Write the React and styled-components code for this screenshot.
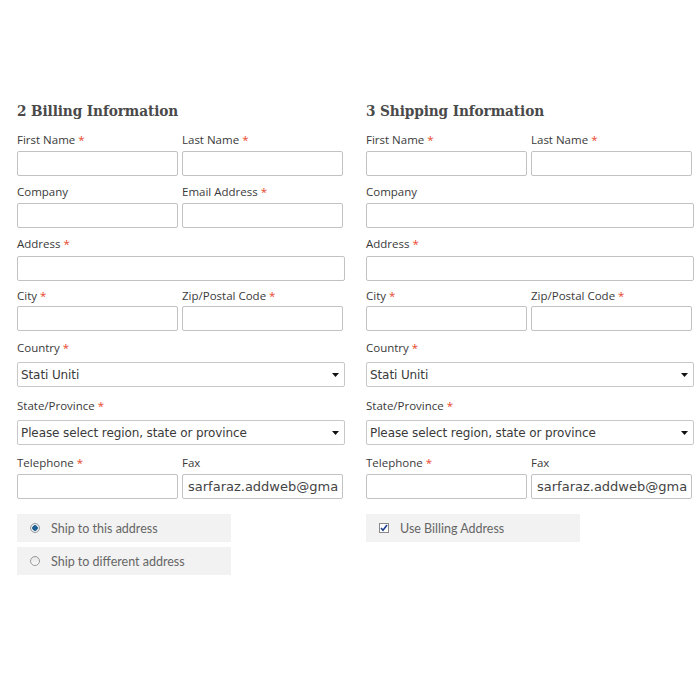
import React from 'react';
import styled, { createGlobalStyle } from 'styled-components';

const GlobalStyle = createGlobalStyle`
  body {
    margin: 0;
    background: #fff;
    font-family: Lato, "Open Sans", sans-serif;
  }
`;

const Page = styled.div`
  display: flex;
  gap: 21px;
  padding: 101px 0 0 17px;
  width: 700px;
  height: 680px;
  box-sizing: border-box;
`;

const Section = styled.div`
  width: 328px;
`;

const Heading = styled.h2`
  margin: 0 0 10px;
  font-family: "DejaVu Serif", serif;
  font-size: 15.2px;
  font-stretch: condensed;
  line-height: 21px;
  font-weight: bold;
  color: #4a4a4a;
  letter-spacing: -0.1px;
`;

const Grid = styled.div`
  display: grid;
  grid-template-columns: 161px 161px;
  column-gap: 4px;
  row-gap: 8px;
`;

const Field = styled.div`
  display: flex;
  flex-direction: column;
  grid-column: ${p => (p.$wide ? '1 / span 2' : 'auto')};
  margin-right: ${p => (p.$wide ? '-2px' : '0')};
  margin-top: ${p => p.$top || 0}px;
`;

const Label = styled.label`
  font-family: "Open Sans", sans-serif;
  font-size: 11.5px;
  line-height: 16px;
  font-weight: 500;
  color: #3a3a3a;
  margin-bottom: ${p => p.$gap || 3}px;
`;

const Star = styled.span`
  color: #e8472b;
  margin-left: 3px;
`;

const Input = styled.input`
  box-sizing: border-box;
  height: 25px;
  width: 100%;
  border: 1px solid #c2c2c2;
  border-radius: 2px;
  background: #fff;
  padding: 0 4px 0 5px;
  font-family: "DejaVu Sans", sans-serif;
  font-size: 13px;
  letter-spacing: 0;
  color: #444;
  outline: none;
`;

const SelectBox = styled.div`
  box-sizing: border-box;
  height: 25px;
  width: 100%;
  border: 1px solid #c8c8c8;
  border-radius: 2px;
  display: flex;
  align-items: center;
  justify-content: space-between;
  padding: 0 5px 0 3px;
  font-family: "DejaVu Sans", sans-serif;
  font-size: 12px;
  letter-spacing: -0.1px;
  color: #3a3a3a;
`;

const Options = styled.div`
  display: flex;
  flex-direction: column;
  gap: 5px;
  margin-top: 15px;
`;

const OptionRow = styled.label`
  width: 214px;
  height: 28px;
  box-sizing: border-box;
  background: #f2f2f2;
  display: flex;
  align-items: center;
  padding-left: 13px;
  gap: 11px;
  font-family: Lato, sans-serif;
  font-size: 12.5px;
  color: #666;
`;

const Radio = styled.span`
  width: 10px;
  height: 10px;
  border-radius: 50%;
  box-sizing: border-box;
  border: 1px solid #9a9a9a;
  background: ${p => (p.$on ? 'radial-gradient(circle, #1f5f8f 0 2.5px, #e8eef3 3px)' : 'linear-gradient(#e6e6e6, #fafafa)')};
`;

const Check = styled.span`
  width: 10px;
  height: 10px;
  box-sizing: border-box;
  border: 1px solid #8a8a8a;
  background: #fff;
  display: flex;
  align-items: center;
  justify-content: center;
`;

const Arrow = () => (
  <svg width="7" height="4" viewBox="0 0 7 4">
    <path d="M0 0h7L3.5 4z" fill="#111" />
  </svg>
);

const Req = () => <Star>*</Star>;

function Form({ title, wideCompany, faxValue, children }) {
  return (
    <Section>
      <Heading>{title}</Heading>
      <Grid>
        <Field>
          <Label>First Name<Req /></Label>
          <Input />
        </Field>
        <Field>
          <Label>Last Name<Req /></Label>
          <Input />
        </Field>
        {wideCompany ? (
          <Field $wide>
            <Label>Company</Label>
            <Input />
          </Field>
        ) : (
          <>
            <Field>
              <Label>Company</Label>
              <Input />
            </Field>
            <Field>
              <Label>Email Address<Req /></Label>
              <Input />
            </Field>
          </>
        )}
        <Field $wide>
          <Label $gap={4}>Address<Req /></Label>
          <Input />
        </Field>
        <Field $top={-1}>
          <Label $gap={2}>City<Req /></Label>
          <Input />
        </Field>
        <Field $top={-1}>
          <Label $gap={2}>Zip/Postal Code<Req /></Label>
          <Input />
        </Field>
        <Field $wide $top={1}>
          <Label $gap={6}>Country<Req /></Label>
          <SelectBox>Stati Uniti<Arrow /></SelectBox>
        </Field>
        <Field $wide $top={3}>
          <Label $gap={6}>State/Province<Req /></Label>
          <SelectBox>Please select region, state or province<Arrow /></SelectBox>
        </Field>
        <Field $top={2}>
          <Label $gap={3}>Telephone<Req /></Label>
          <Input />
        </Field>
        <Field $top={2}>
          <Label $gap={3}>Fax</Label>
          <Input defaultValue={faxValue} />
        </Field>
      </Grid>
      <Options>{children}</Options>
    </Section>
  );
}

export default function App() {
  return (
    <>
      <GlobalStyle />
      <Page>
        <Form title="2 Billing Information" faxValue="sarfaraz.addweb@gmail.com">
          <OptionRow>
            <Radio $on />
            Ship to this address
          </OptionRow>
          <OptionRow>
            <Radio />
            Ship to different address
          </OptionRow>
        </Form>
        <Form title="3 Shipping Information" wideCompany faxValue="sarfaraz.addweb@gmail.com">
          <OptionRow>
            <Check>
              <svg width="8" height="8" viewBox="0 0 8 8">
                <path d="M1 4l2 2.2L7 1" fill="none" stroke="#1d3f8f" strokeWidth="1.6" />
              </svg>
            </Check>
            Use Billing Address
          </OptionRow>
        </Form>
      </Page>
    </>
  );
}
